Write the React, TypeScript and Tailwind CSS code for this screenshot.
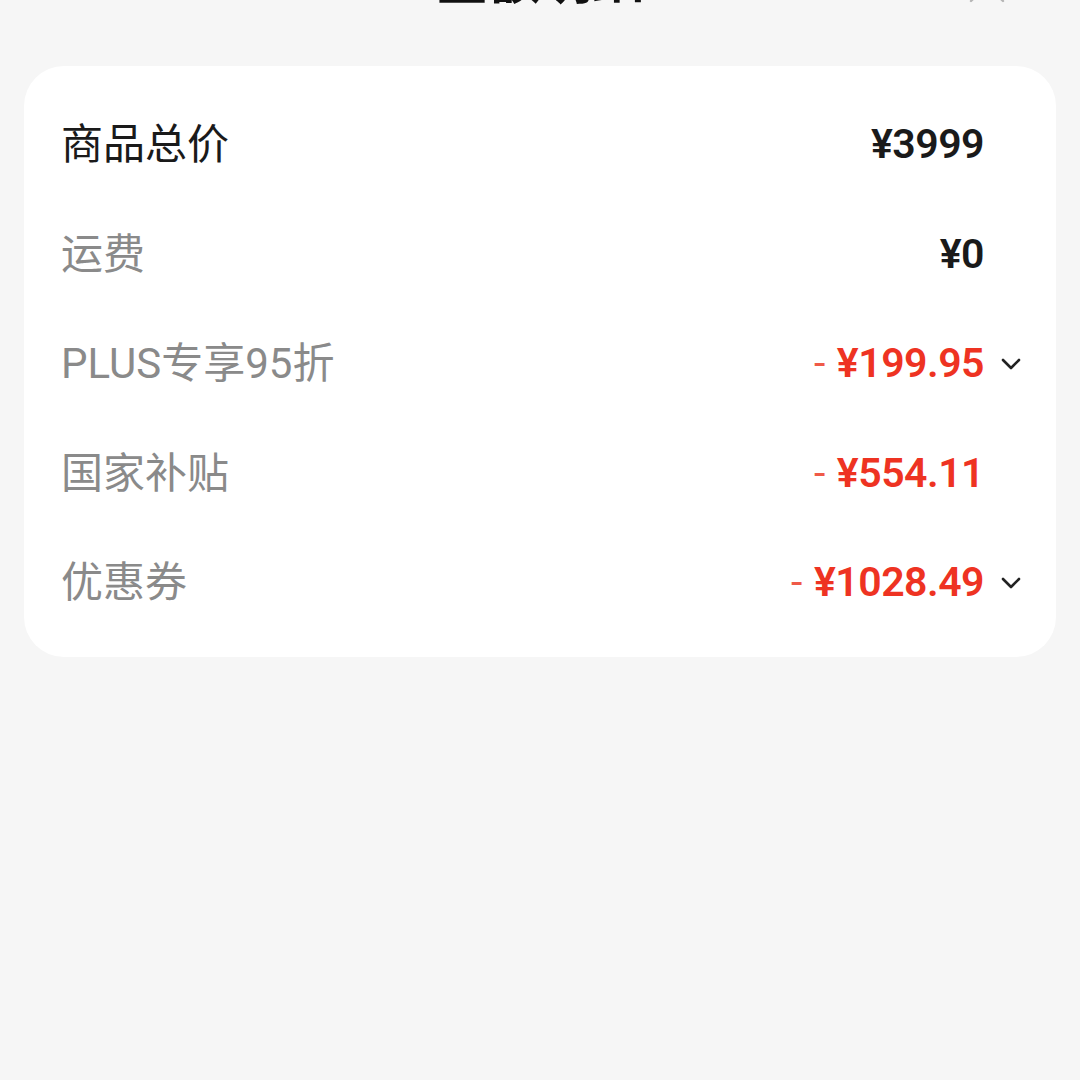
const rows = [
  { label: "商品总价", amount: "¥3999", minus: false, dark: true, more: false },
  { label: "运费", amount: "¥0", minus: false, dark: false, more: false },
  { label: "PLUS专享95折", amount: "¥199.95", minus: true, dark: false, more: true },
  { label: "国家补贴", amount: "¥554.11", minus: true, dark: false, more: false },
  { label: "优惠券", amount: "¥1028.49", minus: true, dark: false, more: true },
];

const Chevron = () => (
  <svg className="h-[20px] w-[22px] text-[#222]" viewBox="0 0 22 20" fill="none" stroke="currentColor" strokeWidth="2.6" strokeLinecap="round" strokeLinejoin="round">
    <path d="M3 6l8 8 8-8" />
  </svg>
);

const App = () => {
  return (
    <div className="min-h-screen w-full bg-[#f6f6f6] overflow-hidden" style={{ fontFamily: "Roboto, 'Noto Sans CJK SC', sans-serif" }}>
      {/* Header (scrolled mostly out of view) */}
      <div className="relative h-[66px] flex justify-center">
        <h1 className="-mt-[44px] text-[52px] leading-[52px] font-bold text-[#111]">金额明细</h1>
        <svg className="absolute right-[74px] -top-[34px] h-[38px] w-[38px] text-[#b5b5b5]" viewBox="0 0 38 38" fill="none" stroke="currentColor" strokeWidth="2.4" strokeLinecap="round">
          <path d="M3 3l32 32M35 3L3 35" />
        </svg>
      </div>

      {/* Amount card */}
      <div className="mx-[24px] rounded-[40px] bg-white pl-[37px] pr-[34px] pt-[24px] pb-[19px]">
        {rows.map((r) => (
          <div key={r.label} className="h-[109.5px] flex items-center justify-between">
            <span className={`text-[42px] ${r.dark ? "text-[#1a1a1a]" : "text-[#8a8a8a]"}`}>{r.label}</span>
            <div className="flex items-center">
              <span className={`text-[41px] font-semibold tracking-[-0.5px] ${r.minus ? "text-[#ee3322]" : "text-[#1a1a1a]"}`}>
                {r.minus && <span className="text-[#ef5a48] font-normal mr-[12px]">-</span>}
                {r.amount}
              </span>
              <div className="w-[38px] flex justify-end">{r.more && <Chevron />}</div>
            </div>
          </div>
        ))}
      </div>
    </div>
  );
};

export default App;
